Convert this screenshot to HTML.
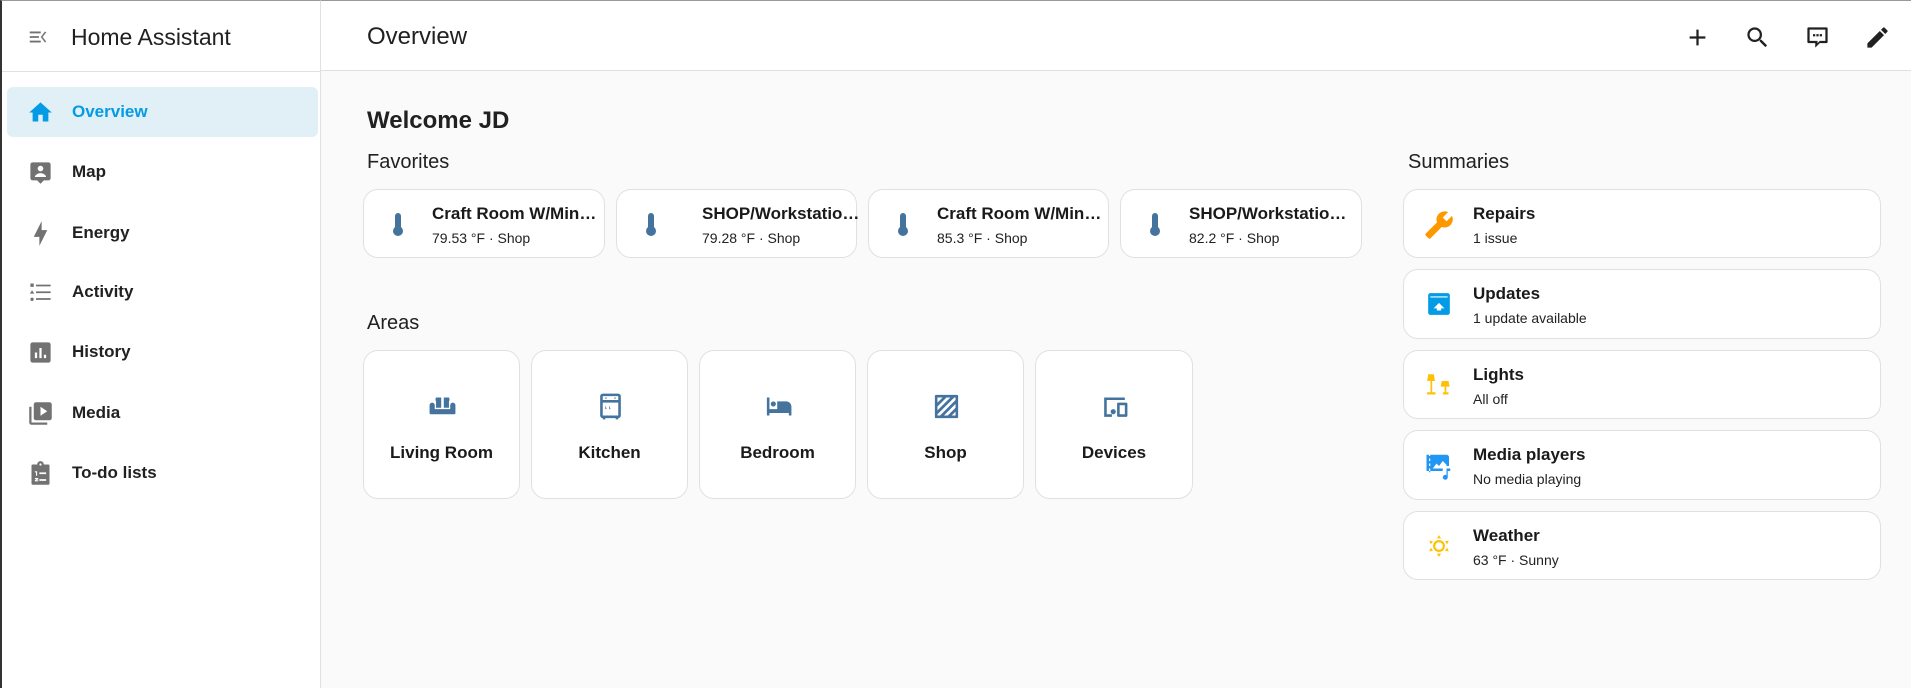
<!DOCTYPE html>
<html><head><meta charset="utf-8"><style>
*{box-sizing:border-box;margin:0;padding:0}
body{width:1911px;height:688px;overflow:hidden;background:#fafafa;font-family:"Liberation Sans",sans-serif;color:#212121;position:relative}
.sb{position:absolute;left:0;top:0;width:321px;height:688px;background:#fff;border-right:1px solid #e0e0e0;border-left:2px solid #333;border-top:1px solid #999}
.hdr{position:absolute;left:321px;top:0;right:0;height:71px;background:#fff;border-bottom:1px solid #e0e0e0;border-top:1px solid #999}
.sbh{height:71px;border-bottom:1px solid #e0e0e0;position:relative}
.nav{position:absolute;left:5px;width:311px;height:50px;border-radius:6px;font-size:17px;font-weight:bold;color:#212121}
.nav svg{position:absolute;left:20px;top:12px;width:27px;height:27px;fill:#727272}
.nav span{position:absolute;left:65px;top:15px}
.nav.act{background:#e1f0f7;color:#039be5}
.nav.act svg{fill:#039be5}
.abs{position:absolute}
.card{position:absolute;background:#fff;border:1px solid #e0e0e0;border-radius:15px}
.ct{position:absolute;font-size:17px;font-weight:bold;white-space:nowrap;color:#1a1a1a}
.cs{position:absolute;font-size:14px;white-space:nowrap}
.hi{position:absolute;top:23px;width:27px;height:27px;fill:#212121}
</style></head><body>
<div class="sb">
 <div class="sbh">
  <svg class="abs" style="left:24px;top:25px" width="24" height="22" viewBox="0 0 24 24" fill="#727272"><path d="M3 6h12v2H3zM3 11h10v2H3zM3 16h12v2H3zM21 7l-4 5 4 5-1.4 1L15 12l4.6-6z"/></svg>
  <div class="abs" style="left:69px;top:23px;font-size:23px">Home Assistant</div>
 </div>
 <div class="nav act" style="top:86px"><svg viewBox="0 0 24 24"><path d="M10,20V14H14V20H19V12H22L12,3L2,12H5V20H10Z"/></svg><span>Overview</span></div>
 <div class="nav" style="top:146px"><svg viewBox="0 0 24 24"><path d="M5 3h14a2 2 0 0 1 2 2v12a2 2 0 0 1-2 2h-4l-3 3-3-3H5a2 2 0 0 1-2-2V5a2 2 0 0 1 2-2zm7 3a2.5 2.5 0 1 0 0 5 2.5 2.5 0 0 0 0-5zm-5 10h10c0-2-3-3.5-5-3.5S7 14 7 16z"/></svg><span>Map</span></div>
 <div class="nav" style="top:207px"><svg viewBox="0 0 24 24"><path d="M11 15H6L13 1V9H18L11 23V15Z"/></svg><span>Energy</span></div>
 <div class="nav" style="top:266px"><svg viewBox="0 0 24 24"><path d="M3 4h3v3H3zM8 5h13v1.5H8zM4.5 10l2 3h-4zM8 11h13v1.5H8zM4.5 16.5a1.5 1.5 0 1 1 0 3 1.5 1.5 0 0 1 0-3zM8 17h13v1.5H8z"/></svg><span>Activity</span></div>
 <div class="nav" style="top:326px"><svg viewBox="0 0 24 24"><path d="M5 3h14a2 2 0 0 1 2 2v14a2 2 0 0 1-2 2H5a2 2 0 0 1-2-2V5a2 2 0 0 1 2-2zm2 9v5h2v-5zm4-4v9h2V8zm4 6v3h2v-3z"/></svg><span>History</span></div>
 <div class="nav" style="top:387px"><svg viewBox="0 0 24 24"><path d="M8 2h12a2 2 0 0 1 2 2v12a2 2 0 0 1-2 2H8a2 2 0 0 1-2-2V4a2 2 0 0 1 2-2zm4 4v8l6-4zM2 6h2v14h14v2H4a2 2 0 0 1-2-2z"/></svg><span>Media</span></div>
 <div class="nav" style="top:447px"><svg viewBox="0 0 24 24"><path d="M5 4h4a3 3 0 0 1 6 0h4a1 1 0 0 1 1 1v16a1 1 0 0 1-1 1H5a1 1 0 0 1-1-1V5a1 1 0 0 1 1-1zm7-1a1 1 0 1 0 0 2 1 1 0 0 0 0-2zM7 10v1h1v3h1v-4zm4 1v1.5h6V11zm-4 5v1h1v.5H7V19h3v-1H8.5v-.5H10V16zm4 1v1.5h6V17z"/></svg><span>To-do lists</span></div>
</div>
<div class="hdr">
 <div class="abs" style="left:46px;top:22px;font-size:24px">Overview</div>
 <svg class="hi" style="left:1363px" viewBox="0 0 24 24"><path d="M19,13H13V19H11V13H5V11H11V5H13V11H19V13Z"/></svg>
 <svg class="hi" style="left:1423px" viewBox="0 0 24 24"><path d="M9.5,3A6.5,6.5 0 0,1 16,9.5C16,11.11 15.41,12.59 14.44,13.73L14.71,14H15.5L20.5,19L19,20.5L14,15.5V14.71L13.73,14.44C12.59,15.41 11.11,16 9.5,16A6.5,6.5 0 0,1 3,9.5A6.5,6.5 0 0,1 9.5,3M9.5,5C7,5 5,7 5,9.5C5,12 7,14 9.5,14C12,14 14,12 14,9.5C14,7 12,5 9.5,5Z"/></svg>
 <svg class="hi" style="left:1483px" viewBox="0 0 24 24"><path d="M4 3h16a1 1 0 0 1 1 1v12a1 1 0 0 1-1 1h-6l-4 4v-4H4a1 1 0 0 1-1-1V4a1 1 0 0 1 1-1zm1 2v10h7v2l2-2h5V5zm3 4h2v2H8zm3 0h2v2h-2zm3 0h2v2h-2z"/></svg>
 <svg class="hi" style="left:1543px" viewBox="0 0 24 24"><path d="M20.71,7.04C21.1,6.65 21.1,6 20.71,5.63L18.37,3.29C18,2.9 17.35,2.9 16.96,3.29L15.12,5.12L18.87,8.87M3,17.25V21H6.75L17.81,9.93L14.06,6.18L3,17.25Z"/></svg>
</div>

<div class="abs" style="left:367px;top:107px;font-size:24px;font-weight:bold">Welcome JD</div>
<div class="abs" style="left:367px;top:151px;font-size:20px">Favorites</div>

<div class="card" style="left:363px;top:189px;width:242px;height:69px"><svg class="abs" style="left:24px;top:22px" width="20" height="26" viewBox="0 0 20 26"><rect x="7" y="1" width="6" height="18" rx="3" fill="#44739e"/><circle cx="10" cy="19" r="5" fill="#44739e"/></svg><div class="ct" style="left:68px;top:14px">Craft Room W/Min…</div><div class="cs" style="left:68px;top:40px">79.53 °F · Shop</div></div>
<div class="card" style="left:616px;top:189px;width:241px;height:69px"><svg class="abs" style="left:24px;top:22px" width="20" height="26" viewBox="0 0 20 26"><rect x="7" y="1" width="6" height="18" rx="3" fill="#44739e"/><circle cx="10" cy="19" r="5" fill="#44739e"/></svg><div class="ct" style="left:85px;top:14px">SHOP/Workstatio…</div><div class="cs" style="left:85px;top:40px">79.28 °F · Shop</div></div>
<div class="card" style="left:868px;top:189px;width:241px;height:69px"><svg class="abs" style="left:24px;top:22px" width="20" height="26" viewBox="0 0 20 26"><rect x="7" y="1" width="6" height="18" rx="3" fill="#44739e"/><circle cx="10" cy="19" r="5" fill="#44739e"/></svg><div class="ct" style="left:68px;top:14px">Craft Room W/Min…</div><div class="cs" style="left:68px;top:40px">85.3 °F · Shop</div></div>
<div class="card" style="left:1120px;top:189px;width:242px;height:69px"><svg class="abs" style="left:24px;top:22px" width="20" height="26" viewBox="0 0 20 26"><rect x="7" y="1" width="6" height="18" rx="3" fill="#44739e"/><circle cx="10" cy="19" r="5" fill="#44739e"/></svg><div class="ct" style="left:68px;top:14px">SHOP/Workstatio…</div><div class="cs" style="left:68px;top:40px">82.2 °F · Shop</div></div>

<div class="abs" style="left:367px;top:312px;font-size:20px">Areas</div>
<div class="card" style="left:363px;top:350px;width:157px;height:149px"><svg class="abs" style="left:63px;top:40px" width="31" height="31" viewBox="0 0 24 24" fill="#44739e"><path d="M4 9a2 2 0 0 1 2 2v3h12v-3a2 2 0 1 1 4 0v6a1 1 0 0 1-1 1H3a1 1 0 0 1-1-1v-6a2 2 0 0 1 2-2zM7 5h4v8H7V8a3 3 0 0 1 0-3zm6 0h4a3 3 0 0 1 0 3v5h-4z"/></svg><div class="ct" style="left:0;right:0;text-align:center;top:92px">Living Room</div></div>
<div class="card" style="left:531px;top:350px;width:157px;height:149px"><svg class="abs" style="left:63px;top:40px" width="31" height="31" viewBox="0 0 24 24" fill="#44739e"><path d="M6 2h12a2 2 0 0 1 2 2v15a2 2 0 0 1-2 2v1h-2v-1H8v1H6v-1a2 2 0 0 1-2-2V4a2 2 0 0 1 2-2zm0 2v3h12V4zm0 5v10h12V9zm2-4h1v1H8zm7 0h1v1h-1zM8 11l1 3h-1zm3 0l1 3h-1z"/></svg><div class="ct" style="left:0;right:0;text-align:center;top:92px">Kitchen</div></div>
<div class="card" style="left:699px;top:350px;width:157px;height:149px"><svg class="abs" style="left:63px;top:40px" width="31" height="31" viewBox="0 0 24 24" fill="#44739e"><path d="M3 5h2v9h6V8h7a4 4 0 0 1 4 4v7h-2v-2H5v2H3zm5 3a2 2 0 1 1 0 4 2 2 0 0 1 0-4z"/></svg><div class="ct" style="left:0;right:0;text-align:center;top:92px">Bedroom</div></div>
<div class="card" style="left:867px;top:350px;width:157px;height:149px"><svg class="abs" style="left:63px;top:40px" width="31" height="31" viewBox="0 0 24 24" fill="#44739e"><path d="M4 3h16a1 1 0 0 1 1 1v16a1 1 0 0 1-1 1H4a1 1 0 0 1-1-1V4a1 1 0 0 1 1-1zm1 2v4l4-4zm7 0L5 12v3L15 5zm6 0L5 18v1h2L19 7V5zm1 5l-9 9h3l6-6zm0 6l-3 3h3z"/></svg><div class="ct" style="left:0;right:0;text-align:center;top:92px">Shop</div></div>
<div class="card" style="left:1035px;top:350px;width:158px;height:149px"><svg class="abs" style="left:63px;top:40px" width="31" height="31" viewBox="0 0 24 24" fill="#44739e"><path d="M4 5h16v2H6v11h4v2H4zm11 4h6a1 1 0 0 1 1 1v9a1 1 0 0 1-1 1h-6a1 1 0 0 1-1-1v-9a1 1 0 0 1 1-1zm1 2v7h4v-7zM11 14a2 2 0 1 1 0 4 2 2 0 0 1 0-4z"/></svg><div class="ct" style="left:0;right:0;text-align:center;top:92px">Devices</div></div>

<div class="abs" style="left:1408px;top:151px;font-size:20px">Summaries</div>
<div class="card" style="left:1403px;top:189px;width:478px;height:69px"><svg class="abs" style="left:20px;top:20px" width="30" height="30" viewBox="0 0 24 24" fill="#ff9800"><g transform="translate(24 0) scale(-1 1)"><path d="M22.7,19L13.6,9.9C14.5,7.6 14,4.9 12.1,3C10.1,1 7.1,0.6 4.7,1.7L9,6L6,9L1.6,4.7C0.4,7.1 0.9,10.1 2.9,12.1C4.8,14 7.5,14.5 9.8,13.6L18.9,22.7C19.3,23.1 19.9,23.1 20.3,22.7L22.6,20.4C23.1,20 23.1,19.3 22.7,19Z"/></g></svg><div class="ct" style="left:69px;top:14px">Repairs</div><div class="cs" style="left:69px;top:40px">1 issue</div></div>
<div class="card" style="left:1403px;top:269px;width:478px;height:70px"><svg class="abs" style="left:22px;top:21px" width="26" height="26" viewBox="0 0 24 24" fill="#039be5"><path d="M4 2h16a2 2 0 0 1 2 2v16a2 2 0 0 1-2 2H4a2 2 0 0 1-2-2V4a2 2 0 0 1 2-2zm0 3v1h16V5zm8 6l-5 5h3v2h4v-2h3z"/></svg><div class="ct" style="left:69px;top:14px">Updates</div><div class="cs" style="left:69px;top:40px">1 update available</div></div>
<div class="card" style="left:1403px;top:350px;width:478px;height:69px"><svg class="abs" style="left:22px;top:21px" width="27" height="27" viewBox="0 0 24 24"><path d="M2 2h5l1 6H1zM4 8h1.5v10h3v2H1v-2h3zM14 8h6l1 5h-8zM16.5 13h1.5v5h2v2h-5v-2h1.5z" fill="#ffc107"/></svg><div class="ct" style="left:69px;top:14px">Lights</div><div class="cs" style="left:69px;top:40px">All off</div></div>
<div class="card" style="left:1403px;top:430px;width:478px;height:70px"><svg class="abs" style="left:20px;top:20px" width="30" height="30" viewBox="0 0 24 24" fill="#2196f3"><path d="M2 3h2v1h1V3h13a2 2 0 0 1 2 2v7h-2v-1l-3-3-3 4-2-2-3 4h8v2H5v1H4v-1H2zm2 3v2h1V6zm0 4v2h1v-2zm0 4v2h1v-2zm14 0h3v2h-2v5a2 2 0 1 1-1-1.7z"/></svg><div class="ct" style="left:69px;top:14px">Media players</div><div class="cs" style="left:69px;top:40px">No media playing</div></div>
<div class="card" style="left:1403px;top:511px;width:478px;height:69px"><svg class="abs" style="left:22px;top:21px" width="26" height="26" viewBox="0 0 24 24" fill="#ffc107"><circle cx="12" cy="12" r="4.5" fill="none" stroke="#ffc107" stroke-width="2"/><path d="M12 2l2 3h-4zM12 22l-2-3h4zM3 7l3.5.5-2 3zM21 7l-1.5 3.5-2-3zM3 17l1.5-3.5 2 3zM21 17l-3.5-.5 2-3z"/></svg><div class="ct" style="left:69px;top:14px">Weather</div><div class="cs" style="left:69px;top:40px">63 °F · Sunny</div></div>
</body></html>
